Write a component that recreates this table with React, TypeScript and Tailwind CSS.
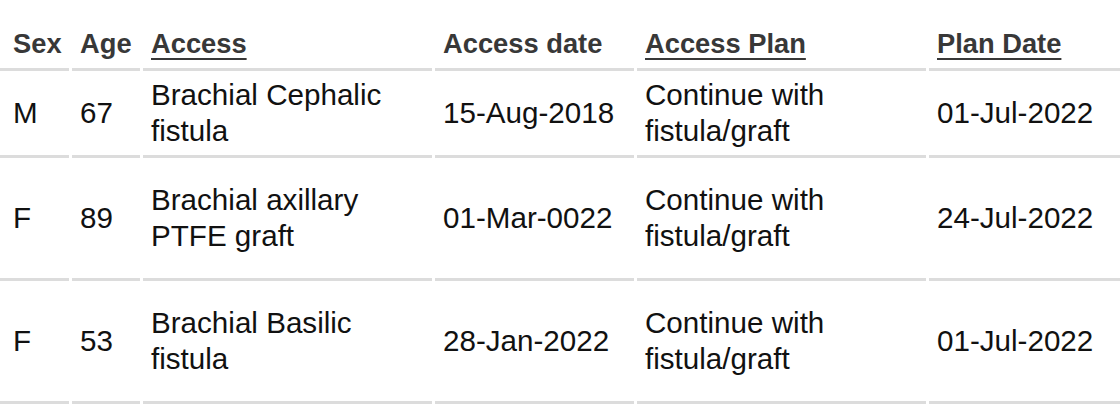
import React from 'react';

type Row = { sex: string; age: number; access: string; accessDate: string; plan: [string, string]; planDate: string; h: string };

const rows: Row[] = [
  { sex: 'M', age: 67, access: 'Brachial Cephalic fistula', accessDate: '15-Aug-2018', plan: ['Continue with', 'fistula/graft'], planDate: '01-Jul-2022', h: 'h-[87px]' },
  { sex: 'F', age: 89, access: 'Brachial axillary PTFE graft', accessDate: '01-Mar-0022', plan: ['Continue with', 'fistula/graft'], planDate: '24-Jul-2022', h: 'h-[123px]' },
  { sex: 'F', age: 53, access: 'Brachial Basilic fistula', accessDate: '28-Jan-2022', plan: ['Continue with', 'fistula/graft'], planDate: '01-Jul-2022', h: 'h-[123px]' },
];

const head = 'flex h-[71px] items-end border-b-[3px] border-[#dcdcdc] px-2 pb-[8px] text-[27.3px] font-bold leading-[32px] text-[#383838]';
const link = 'underline decoration-2 underline-offset-[5px]';

export default function App() {
  return (
    <div className="h-[408px] w-[1120px] overflow-hidden bg-white" style={{ fontFamily: '"Liberation Sans", Helvetica, Arial, sans-serif' }}>
      <div className="-ml-[10px] grid w-[1140px] grid-cols-[12px_64px_68px_289px_199px_289px_1fr] gap-x-[3px]">
        <div className={head} />
        <div className={head}>Sex</div>
        <div className={head}>Age</div>
        <div className={head}><span className={link}>Access</span></div>
        <div className={head}>Access date</div>
        <div className={head}><span className={link}>Access Plan</span></div>
        <div className={head}><span className={link}>Plan Date</span></div>

        {rows.map((r, i) => {
          const cell = `flex items-center border-b-[3px] border-[#dcdcdc] px-2 text-[29.6px] leading-[36px] text-[#111] ${r.h}`;
          return (
            <React.Fragment key={i}>
              <div className={cell} />
              <div className={cell}>{r.sex}</div>
              <div className={cell}>{r.age}</div>
              <div className={cell}>{r.access}</div>
              <div className={cell}>{r.accessDate}</div>
              <div className={cell}>
                <span>
                  {r.plan[0]}
                  <br />
                  {r.plan[1]}
                </span>
              </div>
              <div className={cell}>{r.planDate}</div>
            </React.Fragment>
          );
        })}
      </div>
    </div>
  );
}
